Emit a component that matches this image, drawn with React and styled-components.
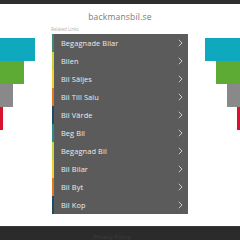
import React from "react";
import styled, { createGlobalStyle } from "styled-components";

const Global = createGlobalStyle`
  html, body { margin: 0; padding: 0; background: #fff; }
  body { font-family: "Open Sans", "Noto Sans", sans-serif; overflow: hidden; }
`;

const Page = styled.div`
  width: 240px;
  height: 240px;
  display: flex;
  flex-direction: column;
  overflow: hidden;
`;

const TopBar = styled.div`
  height: 4px;
  background: #2f2f2f;
  flex: none;
`;

const Title = styled.div`
  height: 20px;
  display: flex;
  align-items: center;
  justify-content: center;
  font-size: 8.5px;
  font-weight: 400;
  color: #7a7a7a;
  letter-spacing: 0.2px;
  padding-top: 2px;
`;

const Main = styled.div`
  display: grid;
  grid-template-columns: 52px 136px 52px;
  align-items: start;
  height: 200px;
  flex: none;
`;

const Side = styled.div`
  display: flex;
  flex-direction: column;
  align-items: ${(p) => (p.$right ? "flex-end" : "flex-start")};
  padding-top: 12px;
`;

const Bar = styled.div`
  height: 23px;
  width: ${(p) => p.$w}px;
  background: ${(p) => p.$c};
`;

const Center = styled.div`
  display: flex;
  flex-direction: column;
`;

const Label = styled.div`
  font-size: 4.5px;
  color: #b0b0b0;
  height: 8px;
  line-height: 6px;
  margin-left: -1px;
`;

const List = styled.div`
  display: flex;
  flex-direction: column;
  background: #5b5b5b;
`;

const Row = styled.div`
  height: 18px;
  display: flex;
  align-items: center;
  justify-content: space-between;
  border-left: 2px solid ${(p) => p.$c};
  padding-left: 7px;
  padding-right: 5px;
  color: #ececec;
  font-size: 7.4px;
  font-weight: 500;
  letter-spacing: 0.1px;
  box-sizing: border-box;
`;

const Chevron = styled.svg`
  width: 5px;
  height: 8px;
  flex: none;
`;

const Footer = styled.div`
  flex: 1;
  background: #2b2b2b;
  border-top: 1px solid #383838;
  display: flex;
  justify-content: center;
  align-items: flex-end;
  color: #3e3e3e;
  font-size: 6px;
  line-height: 5px;
  padding-right: 16px;
`;

const rows = [
  ["Begagnade Bilar", "#3b8a72"],
  ["Bilen", "#c5d43a"],
  ["Bil Säljes", "#f1d12b"],
  ["Bil Till Salu", "#e0781f"],
  ["Bil Värde", "#1e4b62"],
  ["Beg Bil", "#2c8a8a"],
  ["Begagnad Bil", "#c5d43a"],
  ["Bil Bilar", "#f1d12b"],
  ["Bil Byt", "#e0781f"],
  ["Bil Kop", "#1e4b62"],
];

const bars = [
  [35, "#0fa9bf"],
  [24, "#5daa35"],
  [13, "#898989"],
  [3, "#d6122e"],
];

export default function App() {
  return (
    <Page>
      <Global />
      <TopBar />
      <Title>backmansbil.se</Title>
      <Main>
        <Side>
          {bars.map(([w, c]) => (
            <Bar key={c} $w={w} $c={c} />
          ))}
        </Side>
        <Center>
          <Label>Related Links</Label>
          <List>
            {rows.map(([t, c]) => (
              <Row key={t} $c={c}>
                <span>{t}</span>
                <Chevron viewBox="0 0 5 8">
                  <path d="M0.8 0.8 L4 4 L0.8 7.2" fill="none" stroke="#e6e6e6" strokeWidth="0.8" />
                </Chevron>
              </Row>
            ))}
          </List>
        </Center>
        <Side $right>
          {bars.map(([w, c]) => (
            <Bar key={c} $w={w} $c={c} />
          ))}
        </Side>
      </Main>
      <Footer>Privacy Policy</Footer>
    </Page>
  );
}
